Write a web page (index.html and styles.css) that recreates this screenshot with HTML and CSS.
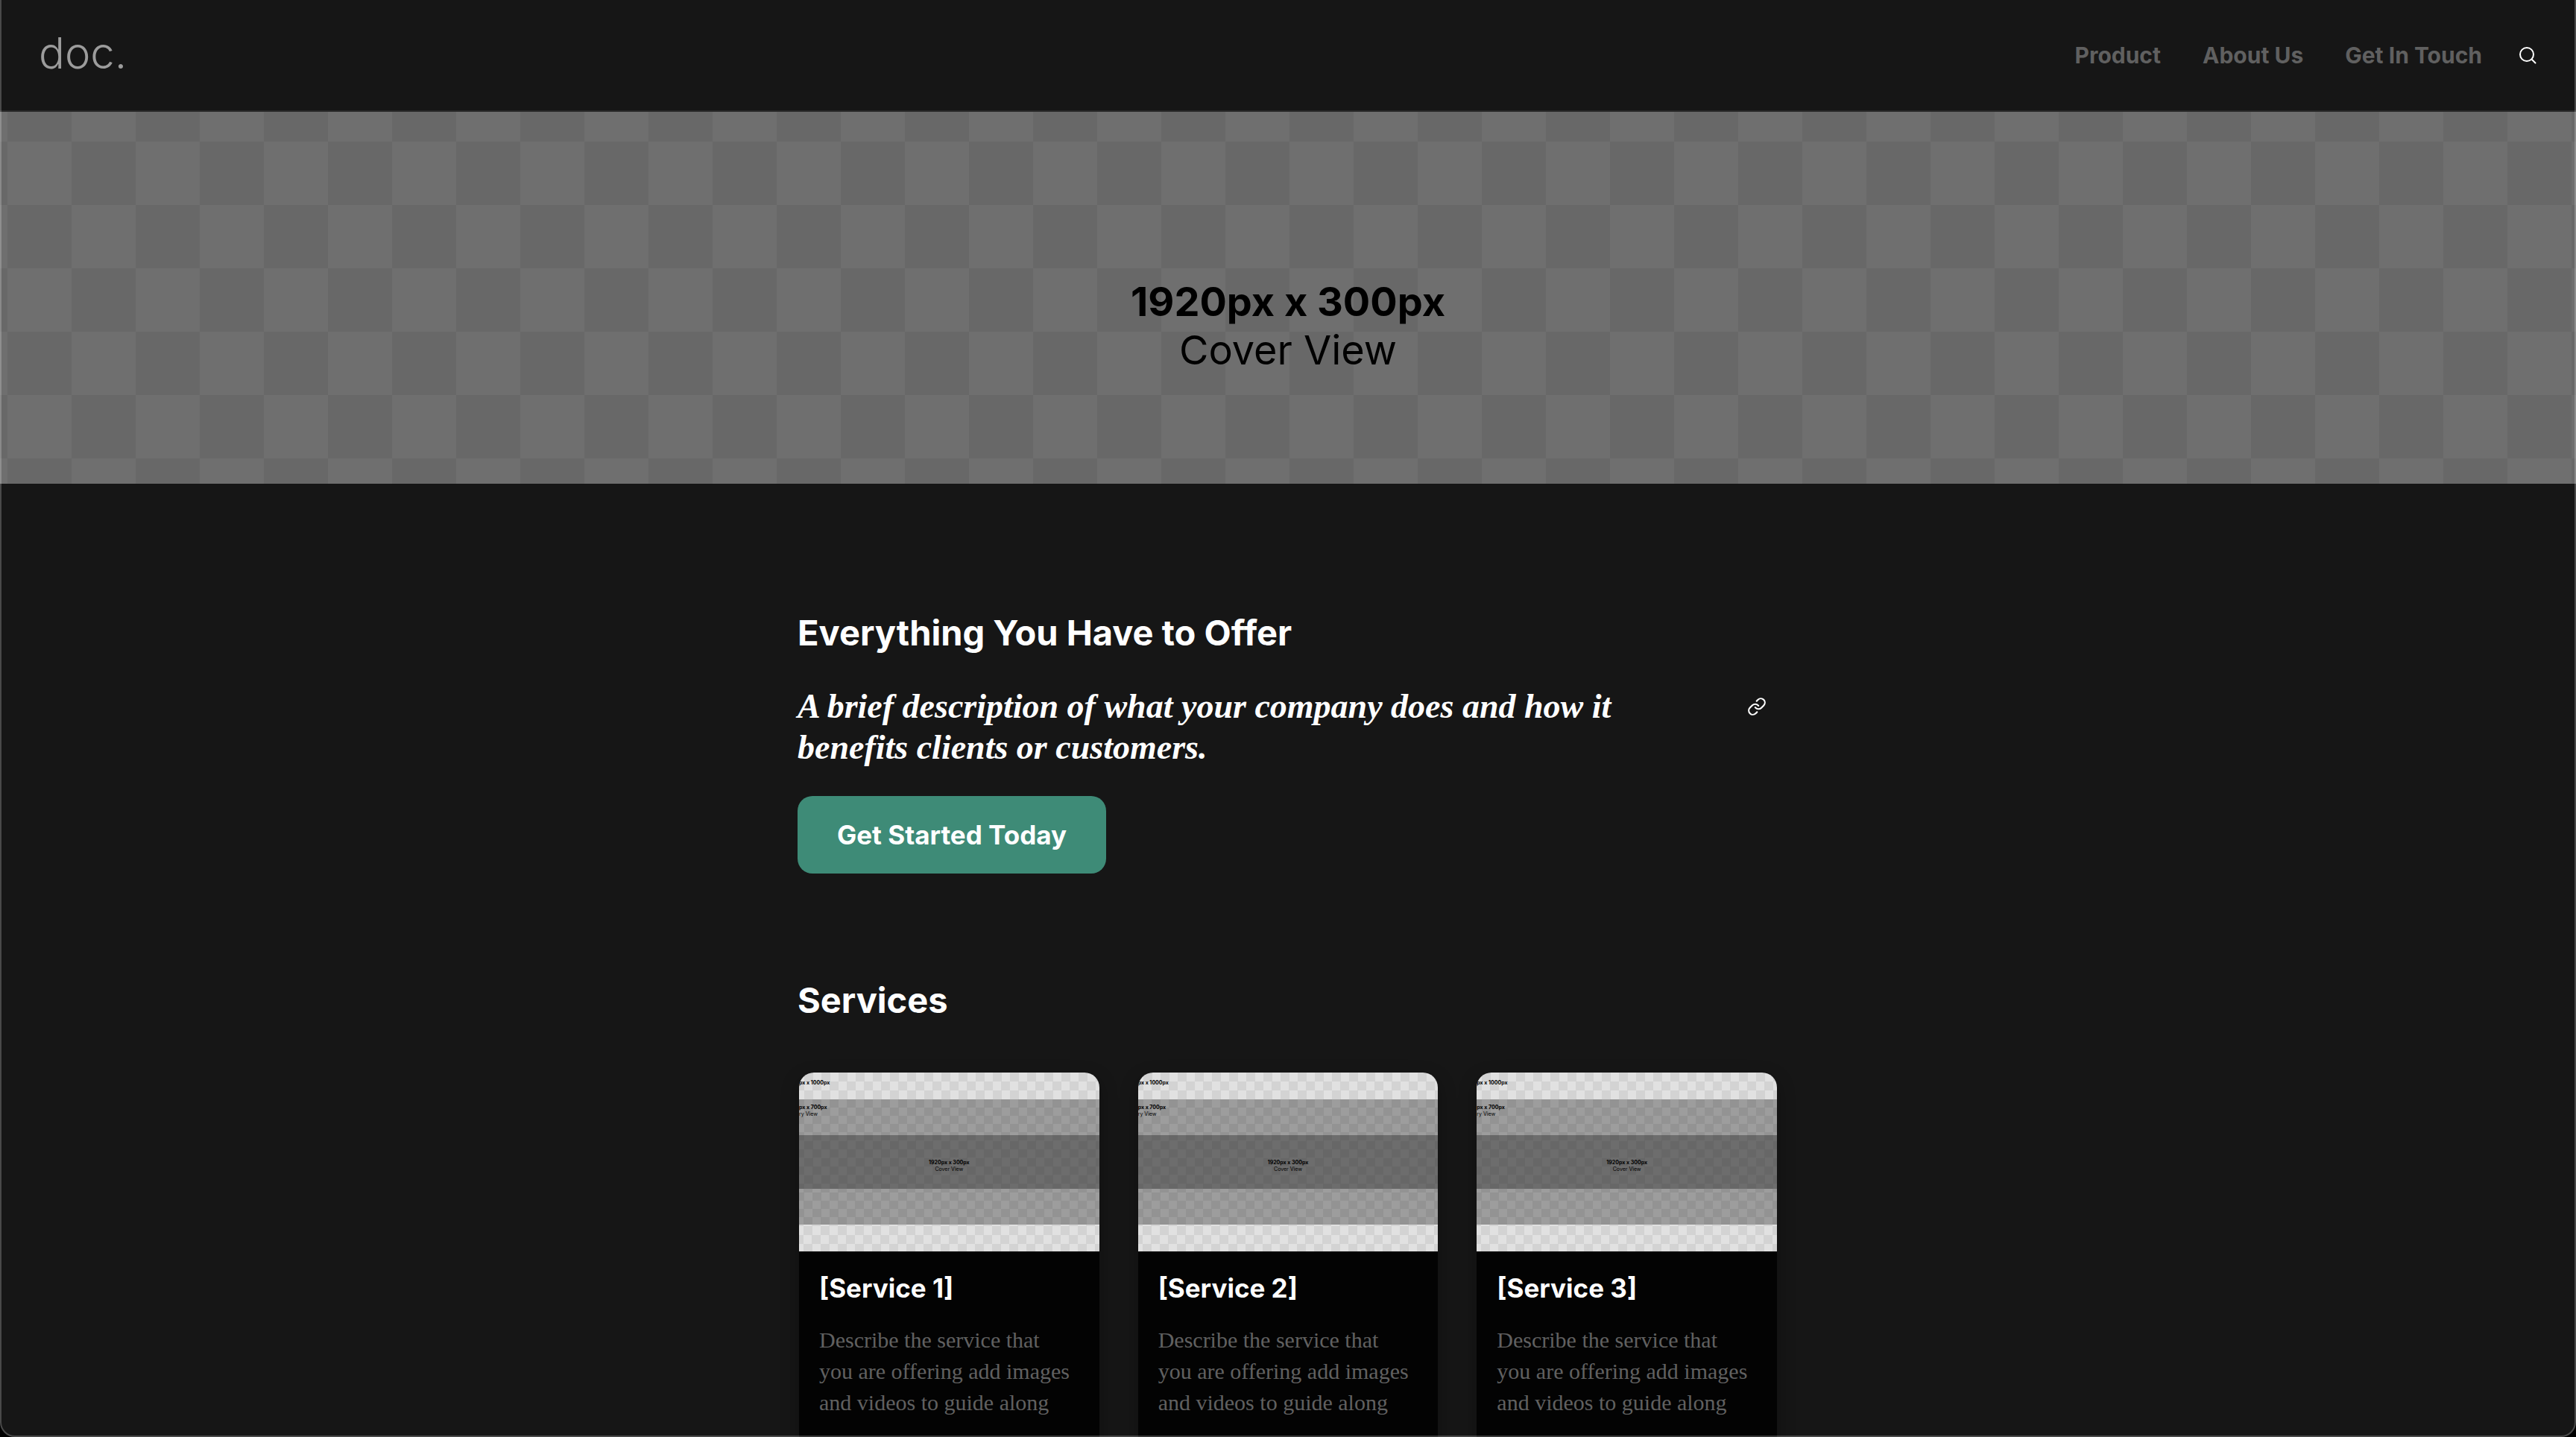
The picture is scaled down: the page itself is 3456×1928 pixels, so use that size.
FILE: index.html
```html
<!DOCTYPE html>
<html lang="en">
<head>
<meta charset="utf-8">
<title>doc.</title>
<link rel="stylesheet" href="styles.css">
</head>
<body>
<div class="window">
  <header class="topbar">
    <a class="logo" href="#">doc.</a>
    <nav class="nav">
      <a href="#">Product</a>
      <a href="#">About Us</a>
      <a href="#">Get In Touch</a>
    </nav>
    <button class="icon-button search" type="button" aria-label="Search">
      <svg viewBox="0 0 26 26" width="26" height="26"><circle cx="12" cy="12" r="9"/><path d="M18.5 18.5 L23.5 23.5"/></svg>
    </button>
  </header>
  <section class="cover">
    <p class="cover-size">1920px x 300px</p>
    <p class="cover-name">Cover View</p>
  </section>
  <main class="content">
    <h1 class="heading">Everything You Have to Offer</h1>
    <div class="intro">
      <p class="tagline">A brief description of what your company does and how it benefits clients or customers.</p>
      <button class="icon-button link" type="button" aria-label="Copy link">
        <svg viewBox="0 0 24 24" width="26" height="26"><path d="M10 13a5 5 0 0 0 7.54.54l3-3a5 5 0 0 0-7.07-7.07l-1.72 1.71"/><path d="M14 11a5 5 0 0 0-7.54-.54l-3 3a5 5 0 0 0 7.07 7.07l1.71-1.71"/></svg>
      </button>
    </div>
    <button class="cta" type="button">Get Started Today</button>
    <h2 class="heading services-heading">Services</h2>
    <div class="cards">
      <article class="card">
        <div class="thumb">
          <div class="band band-1"><b>px x 1000px</b></div>
          <div class="band band-2"><b>px x 700px</b><span>ry View</span></div>
          <div class="band band-3"><b>1920px x 300px</b><span>Cover View</span></div>
          <div class="band band-4"></div>
          <div class="band band-5"></div>
        </div>
        <div class="card-body">
          <h3>[Service 1]</h3>
          <p>Describe the service that you are offering add images and videos to guide along</p>
        </div>
      </article>
      <article class="card">
        <div class="thumb">
          <div class="band band-1"><b>px x 1000px</b></div>
          <div class="band band-2"><b>px x 700px</b><span>ry View</span></div>
          <div class="band band-3"><b>1920px x 300px</b><span>Cover View</span></div>
          <div class="band band-4"></div>
          <div class="band band-5"></div>
        </div>
        <div class="card-body">
          <h3>[Service 2]</h3>
          <p>Describe the service that you are offering add images and videos to guide along</p>
        </div>
      </article>
      <article class="card">
        <div class="thumb">
          <div class="band band-1"><b>px x 1000px</b></div>
          <div class="band band-2"><b>px x 700px</b><span>ry View</span></div>
          <div class="band band-3"><b>1920px x 300px</b><span>Cover View</span></div>
          <div class="band band-4"></div>
          <div class="band band-5"></div>
        </div>
        <div class="card-body">
          <h3>[Service 3]</h3>
          <p>Describe the service that you are offering add images and videos to guide along</p>
        </div>
      </article>
    </div>
  </main>
</div>
</body>
</html>
```
FILE: styles.css
```css
* { box-sizing: border-box; }

body, h1, h2, h3, p { margin: 0; }

body {
  background: #161616;
  color: #fff;
  font-family: Inter, "Liberation Sans", sans-serif;
}

.window {
  height: 100vh;
  overflow: hidden;
}

/* Thin window outline with rounded lower corners */
.window::after {
  content: "";
  position: fixed;
  inset: -2px 0 0;
  border: 2px solid rgba(255, 255, 255, 0.22);
  border-radius: 0 0 20px 20px;
  box-shadow: 0 0 0 20px #000;
  pointer-events: none;
}

.topbar {
  display: flex;
  align-items: center;
  height: 150px;
  padding: 0 52px;
  border-bottom: 2px solid #282828;
}

.logo {
  margin-right: auto;
  padding-bottom: 6px;
  color: #9c9c9c;
  font-size: 58px;
  font-weight: 300;
  line-height: 72px;
  text-decoration: none;
}

.nav {
  display: flex;
  gap: 56px;
  margin-right: 48px;
}

.nav a {
  color: #606060;
  font-size: 30px;
  font-weight: 700;
  line-height: 36px;
  text-decoration: none;
}

.icon-button {
  display: block;
  padding: 0;
  border: 0;
  background: none;
}

.icon-button svg {
  display: block;
  fill: none;
  stroke: #fff;
  stroke-width: 2;
  stroke-linecap: round;
  stroke-linejoin: round;
}

.cover {
  height: 499px;
  padding-top: 222px;
  background: repeating-conic-gradient(#686868 0 25%, #6f6f6f 0 50%) 10px 40px / 172px 170px;
  color: #000;
  font-size: 54px;
  line-height: 65px;
  text-align: center;
}

.cover-size { font-weight: 700; }

.content {
  width: 1316px;
  max-width: 100%;
  margin: 0 auto;
  padding-top: 170px;
}

.heading {
  font-size: 47px;
  font-weight: 700;
  line-height: 60px;
}

.intro {
  display: flex;
  justify-content: space-between;
  margin: 41px 0 38px;
  padding-right: 16px;
}

.tagline {
  width: 1150px;
  font-family: "Liberation Serif", serif;
  font-size: 46px;
  font-style: italic;
  font-weight: 700;
  line-height: 55px;
}

.link { align-self: flex-start; margin-top: 15px; }

.cta {
  display: block;
  padding: 30px 53px;
  border: 0;
  border-radius: 20px;
  background: #3e8b77;
  color: #fff;
  font-family: inherit;
  font-size: 35px;
  font-weight: 700;
  line-height: 44px;
}

.services-heading { margin: 140px 0 67px; }

.cards {
  display: grid;
  grid-template-columns: repeat(3, 1fr);
  gap: 52px;
  padding: 0 2px;
}

.card {
  min-height: 560px;
  overflow: hidden;
  border-radius: 20px;
  background: #030303;
  box-shadow: 0 8px 24px rgba(0, 0, 0, 0.3);
}

.thumb {
  color: #000;
  font-size: 7px;
  line-height: 9px;
}

.band b, .band span { display: block; }

.band-1 {
  height: 36px;
  padding-top: 9px;
  background: repeating-conic-gradient(#d3d3d3 0 25%, #e1e1e1 0 50%) 7px -12px / 23px 24px;
}

.band-2 {
  height: 48px;
  padding-top: 6px;
  background: repeating-conic-gradient(#939393 0 25%, #9d9d9d 0 50%) 7px 0 / 23px 22px;
}

.band-3 {
  height: 72px;
  padding-top: 32px;
  background: repeating-conic-gradient(#676767 0 25%, #6d6d6d 0 50%) 7px -4px / 23px 23px;
  text-align: center;
}

.band-4 {
  height: 48px;
  background: repeating-conic-gradient(#939393 0 25%, #9d9d9d 0 50%) 18px -6px / 23px 22px;
}

.band-5 {
  height: 36px;
  background: repeating-conic-gradient(#d3d3d3 0 25%, #e1e1e1 0 50%) 6px -10px / 23px 24px;
}

.card-body { padding: 27px 33px 27px 27px; }

.card h3 {
  margin-bottom: 27px;
  font-size: 35px;
  font-weight: 700;
  line-height: 44px;
}

.card p {
  color: #606060;
  font-family: "Liberation Serif", serif;
  font-size: 30px;
  line-height: 42px;
}
```
